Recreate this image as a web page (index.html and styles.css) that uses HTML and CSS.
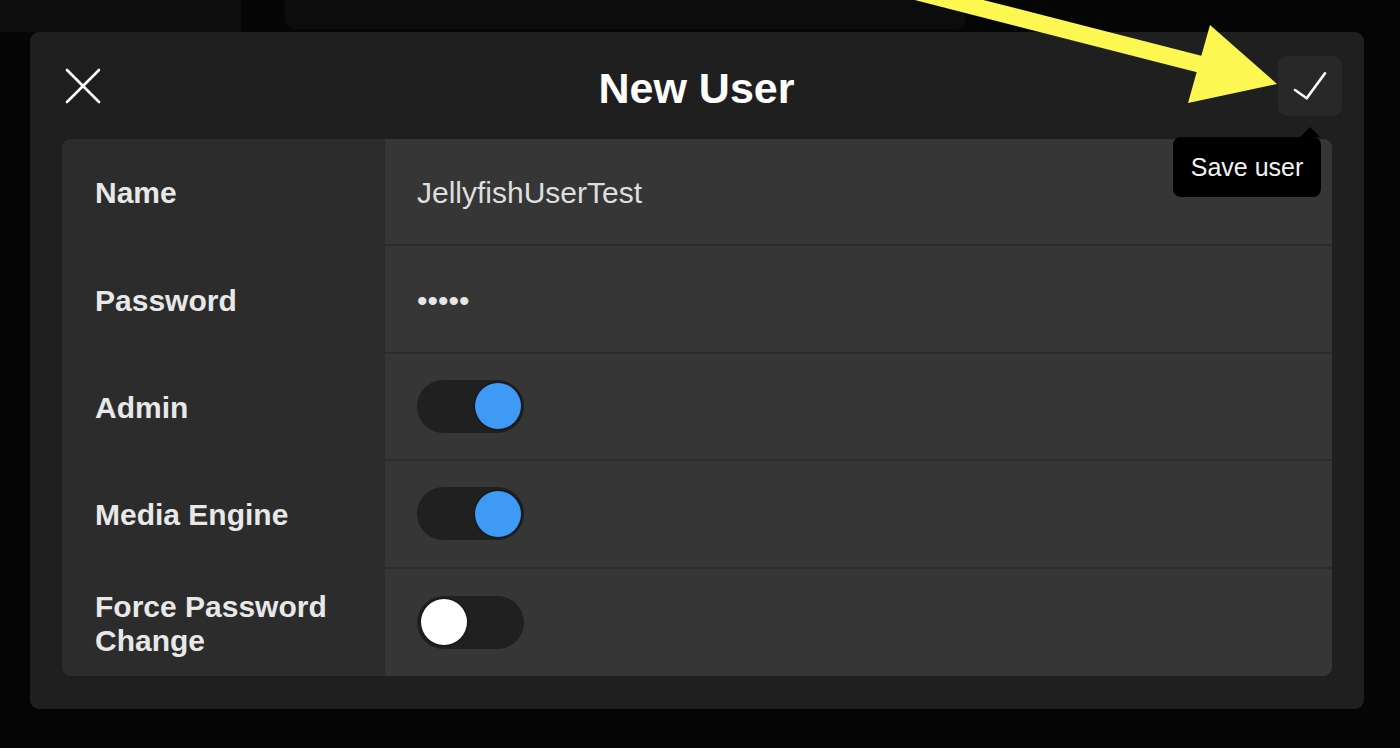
FILE: index.html
```html
<!DOCTYPE html>
<html lang="en">
<head>
<meta charset="utf-8">
<title>New User</title>
<link rel="stylesheet" href="styles.css">
</head>
<body>
<div class="backdrop">
  <div class="bd-left"></div>
  <div class="bd-panel"></div>
</div>

<div class="modal">
  <header class="modal-header">
    <button class="icon-btn close-btn" aria-label="Close">
      <svg viewBox="0 0 64 60" width="64" height="60">
        <path d="M16 14 L48 46 M48 14 L16 46" stroke="#fff" stroke-width="2.6" stroke-linecap="round" fill="none"/>
      </svg>
    </button>
    <h1 class="title">New User</h1>
    <div class="save-wrap">
      <button class="icon-btn save-btn" aria-label="Save user">
        <svg viewBox="0 0 64 60" width="64" height="60">
          <path d="M17 34 L28.7 42.3 L47 17.3" stroke="#fff" stroke-width="2.6" stroke-linecap="round" stroke-linejoin="round" fill="none"/>
        </svg>
      </button>
      <div class="tooltip">Save user</div>
    </div>
  </header>

  <div class="form-table">
    <div class="row">
      <div class="label">Name</div>
      <div class="value text">JellyfishUserTest</div>
    </div>
    <div class="row">
      <div class="label">Password</div>
      <div class="value text dots">•••••</div>
    </div>
    <div class="row">
      <div class="label">Admin</div>
      <div class="value"><span class="toggle on"><span class="knob"></span></span></div>
    </div>
    <div class="row">
      <div class="label">Media Engine</div>
      <div class="value"><span class="toggle on"><span class="knob"></span></span></div>
    </div>
    <div class="row">
      <div class="label">Force Password Change</div>
      <div class="value"><span class="toggle off"><span class="knob"></span></span></div>
    </div>
  </div>
</div>

<svg class="annotation" width="1400" height="748" viewBox="0 0 1400 748">
  <line x1="849" y1="-25.6" x2="1205" y2="65.5" stroke="#fcf851" stroke-width="17"/>
  <polygon points="1210,25 1277,84 1188,103" fill="#fcf851"/>
</svg>
</body>
</html>
```

FILE: styles.css
```css
* { box-sizing: border-box; }

html, body {
  margin: 0;
  padding: 0;
  background: #050505;
  width: 1400px;
  height: 748px;
  overflow: hidden;
  font-family: "Liberation Sans", Arial, Helvetica, sans-serif;
  position: relative;
}

.backdrop {
  display: flex;
  height: 32px;
  gap: 44px;
}
.bd-left {
  width: 241px;
  height: 32px;
  background: #0e0e0e;
}
.bd-panel {
  width: 680px;
  height: 29px;
  background: #0c0c0c;
  border-radius: 0 0 9px 9px;
}

.modal {
  margin-left: 30px;
  width: 1334px;
  height: 677px;
  background: #1f1f1f;
  border-radius: 9px;
  padding: 0 32px 33px 32px;
  display: flex;
  flex-direction: column;
}

.modal-header {
  height: 107px;
  margin: 0 -10px 0 -11px;
  display: grid;
  grid-template-columns: 1fr auto 1fr;
  align-items: center;
}

.icon-btn {
  width: 64px;
  height: 60px;
  border: 0;
  padding: 0;
  margin: 0;
  background: transparent;
  border-radius: 9px;
  display: block;
}
.icon-btn svg { display: block; }

.close-btn { justify-self: start; }

.title {
  margin: 0;
  font-size: 43px;
  font-weight: 700;
  color: #ffffff;
  line-height: 1;
  padding-top: 5px;
}

.save-wrap {
  justify-self: end;
  position: relative;
}
.save-btn { background: #282828; }

.tooltip {
  position: absolute;
  top: calc(100% + 21px);
  left: -105px;
  width: 148px;
  height: 60px;
  background: #000;
  color: #f2f2f2;
  border-radius: 8px;
  font-size: 25px;
  padding-top: 2px;
  display: flex;
  align-items: center;
  justify-content: center;
  z-index: 2;
}
.tooltip::before {
  content: "";
  position: absolute;
  top: -10px;
  left: 127px;
  border-left: 10px solid transparent;
  border-right: 10px solid transparent;
  border-bottom: 10px solid #000;
}

.form-table {
  flex: 1;
  display: grid;
  grid-template-rows: repeat(5, 1fr);
  border-radius: 9px;
  overflow: hidden;
  background: #363636;
}

.row {
  display: grid;
  grid-template-columns: 323px 1fr;
  border-bottom: 2px solid #2c2c2c;
}
.row:last-child { border-bottom: 0; }

.label {
  background: #2c2c2c;
  color: #e8e8e8;
  font-size: 30px;
  font-weight: 700;
  line-height: 34px;
  padding: 3px 20px 0 33px;
  display: flex;
  align-items: center;
}

.value {
  background: #363636;
  color: #dedede;
  font-size: 30px;
  padding-left: 32px;
  display: flex;
  align-items: center;
}
.value.text { padding-top: 3px; }
.dots { color: #e6e6e6; }

.toggle {
  width: 107px;
  height: 53px;
  border-radius: 27px;
  background: #202020;
  padding: 3.5px;
  display: flex;
  align-items: center;
}
.toggle.on { justify-content: flex-end; }
.toggle.off { justify-content: flex-start; }

.knob {
  width: 46px;
  height: 46px;
  border-radius: 50%;
  box-shadow: 0 0 0 1.5px #191919;
}
.toggle.on .knob { background: #3e9af5; }
.toggle.off .knob { background: #ffffff; }

.annotation {
  position: absolute;
  top: 0;
  left: 0;
  pointer-events: none;
  z-index: 5;
}
```
